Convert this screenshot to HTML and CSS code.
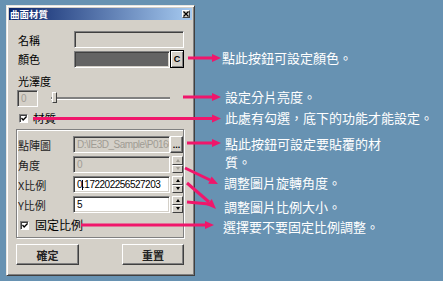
FILE: index.html
```html
<!DOCTYPE html>
<html lang="zh-Hant">
<head>
    <meta charset="UTF-8">
    <meta name="viewport" content="width=device-width, initial-scale=1.0">
    <title>曲面材質</title>
    <link rel="stylesheet" href="styles.css">
</head>
<body>

    <div class="dialog">
        <div class="titlebar">
            <span class="title">曲面材質</span>
            <span class="close">
                <svg width="6" height="6" viewBox="0 0 6 6"><path d="M0.5 0.5 L5.5 5.5 M5.5 0.5 L0.5 5.5" stroke="#000" stroke-width="1.2"/></svg>
            </span>
        </div>

        <div class="dialog-body">
            <div class="row top-row">
                <span class="label">名稱</span>
                <span class="field field-disabled field-wide"></span>
            </div>
            <div class="row top-row row-color">
                <span class="label">顏色</span>
                <span class="field field-color"></span>
                <span class="btn btn-default">C</span>
            </div>
            <div class="row top-row row-label">
                <span class="label">光澤度</span>
            </div>
            <div class="row top-row">
                <span class="field field-disabled field-small"><span class="value muted">0</span></span>
                <div class="slider">
                    <span class="track"></span>
                    <span class="thumb"></span>
                </div>
            </div>
            <div class="row check-row">
                <span class="checkbox">
                    <svg width="7" height="7" viewBox="0 0 7 7"><path d="M0.5 3 L2.5 5.2 L6.5 1" fill="none" stroke="#000" stroke-width="1.6"/></svg>
                </span>
                <span class="check-text">材質</span>
            </div>

            <div class="group">
                <div class="row">
                    <span class="label label-group">點陣圖</span>
                    <span class="field field-disabled field-mid"><span class="value muted">D:\IE3D_Sample\P0160</span></span>
                    <span class="btn btn-dots">...</span>
                </div>
                <div class="row">
                    <span class="label label-group">角度</span>
                    <span class="field field-disabled field-mid"><span class="value muted">0</span></span>
                    <span class="spinner spinner-off">
                        <span class="spin-btn"><span class="up"></span></span>
                        <span class="spin-btn"><span class="down"></span></span>
                    </span>
                </div>
                <div class="row">
                    <span class="label label-group">X比例</span>
                    <span class="field field-mid"><span class="value">0.172202256527203</span><span class="caret"></span></span>
                    <span class="spinner">
                        <span class="spin-btn"><span class="up"></span></span>
                        <span class="spin-btn"><span class="down"></span></span>
                    </span>
                </div>
                <div class="row">
                    <span class="label label-group">Y比例</span>
                    <span class="field field-mid"><span class="value">5</span></span>
                    <span class="spinner">
                        <span class="spin-btn"><span class="up"></span></span>
                        <span class="spin-btn"><span class="down"></span></span>
                    </span>
                </div>
                <div class="row check-row group-check">
                    <span class="checkbox">
                        <svg width="7" height="7" viewBox="0 0 7 7"><path d="M0.5 3 L2.5 5.2 L6.5 1" fill="none" stroke="#000" stroke-width="1.6"/></svg>
                    </span>
                    <span class="check-text">固定比例</span>
                </div>
            </div>

            <div class="actions">
                <span class="btn btn-ok">確定</span>
                <span class="btn btn-reset">重置</span>
            </div>
        </div>
    </div>

    <div class="notes">
        <div class="note note-1">點此按鈕可設定顏色。</div>
        <div class="note note-2">設定分片亮度。</div>
        <div class="note note-3">此處有勾選，底下的功能才能設定。</div>
        <div class="note note-4">點此按鈕可設定要貼覆的材<br>質。</div>
        <div class="note note-5">調整圖片旋轉角度。</div>
        <div class="note note-6">調整圖片比例大小。</div>
        <div class="note note-7">選擇要不要固定比例調整。</div>
    </div>

    <!-- callout arrows -->
    <svg class="arrows" width="443" height="281" viewBox="0 0 443 281">
        <g stroke="#f0166b" stroke-width="3" fill="none">
            <path d="M188 58 H213"/>
            <path d="M183 97 H213"/>
            <path d="M33 118.5 H213"/>
            <path d="M187 143 H213"/>
            <path d="M185 168 L210 180"/>
            <path d="M187 183 L209 202"/>
            <path d="M187 202 L209 204"/>
            <path d="M81 225 H206"/>
        </g>
        <g fill="#f0166b">
            <polygon points="212,54 221,58 212,62"/>
            <polygon points="212,93 221,97 212,101"/>
            <polygon points="212,114.5 221,118.5 212,122.5"/>
            <polygon points="212,139 221,143 212,147"/>
            <polygon points="211.6,176.5 218,184 208.2,183.7"/>
            <polygon points="211.8,199.1 216,209 206.6,205.1"/>
            <polygon points="205,221 214,225 205,229"/>
        </g>
    </svg>

</body>
</html>
```

FILE: styles.css
```css
body {
    margin: 0;
    width: 443px;
    height: 281px;
    position: relative;
    overflow: hidden;
    background-color: #6792b2;
    display: flex;
    align-items: flex-start;
    font-family: "Noto Sans CJK TC", "Liberation Sans", sans-serif;
}

.dialog {
    box-sizing: border-box;
    width: 189px;
    height: 271px;
    margin: 5px 0 0 6px;
    padding: 2px;
    background: #d4d0c8;
    border: 1px solid;
    border-color: #e8e6e0 #404040 #404040 #e8e6e0;
    box-shadow: inset 1px 1px #fff, inset -1px -1px #808080;
    display: flex;
    flex-direction: column;
    flex-shrink: 0;
}

.titlebar {
    height: 12px;
    display: flex;
    align-items: center;
    justify-content: space-between;
    padding: 0 2px 0 1px;
    background: linear-gradient(to right, #0a246a, #a6caf0);
}

.title {
    color: #fff;
    font-size: 9.5px;
    font-weight: bold;
    line-height: 12px;
}

.close {
    box-sizing: border-box;
    width: 8px;
    height: 8px;
    display: flex;
    align-items: center;
    justify-content: center;
    background: #d4d0c8;
    border: 1px solid;
    border-color: #fff #404040 #404040 #fff;
}

.close svg {
    display: block;
}

.dialog-body {
    padding: 11px 8px 0 7px;
    font-size: 11px;
    color: #000;
}

.row {
    display: flex;
    align-items: center;
    height: 17px;
}

.top-row {
    padding-left: 2px;
}

.row + .row {
    margin-top: 2px;
}

.row-color {
    height: 18px;
}

.row-label {
    height: 20px;
    align-items: flex-end;
    margin-top: 0 !important;
}

.label {
    width: 56px;
    flex-shrink: 0;
    line-height: 14px;
}

.label-group {
    width: 55px;
    color: #222;
}

.field {
    box-sizing: border-box;
    height: 17px;
    background: #fff;
    border: 1px solid;
    border-color: #808080 #fff #fff #808080;
    box-shadow: inset 1px 1px #404040, inset -1px -1px #d4d0c8;
    display: flex;
    align-items: center;
    overflow: hidden;
    white-space: nowrap;
    position: relative;
    flex-shrink: 0;
}

.field-disabled {
    background: #d4d0c8;
}

.field-wide {
    width: 110px;
}

.field-color {
    width: 96px;
    background: #646464;
}

.field-small {
    width: 21px;
    margin-left: -1px;
}

.field-mid {
    width: 97px;
}

.value {
    padding-left: 3px;
    font-family: "Liberation Sans", sans-serif;
    font-size: 10px;
    letter-spacing: -0.5px;
    color: #000;
}

.value.muted {
    color: #a09c94;
}

.caret {
    position: absolute;
    left: 8px;
    top: 3px;
    width: 1px;
    height: 10px;
    background: #000;
}

.btn {
    box-sizing: border-box;
    display: flex;
    align-items: center;
    justify-content: center;
    background: #d4d0c8;
    border: 1px solid;
    border-color: #fff #404040 #404040 #fff;
    box-shadow: inset -1px -1px #808080;
    flex-shrink: 0;
}

.btn-default {
    width: 14px;
    height: 18px;
    border: 1px solid #000;
    box-shadow: inset 1px 1px #fff, inset -1px -1px #808080;
    font-family: "Liberation Sans", sans-serif;
    font-size: 9px;
    font-weight: bold;
}

.btn-dots {
    width: 13px;
    height: 17px;
    font-family: "Liberation Sans", sans-serif;
    font-size: 9px;
    font-weight: bold;
    line-height: 8px;
}

.slider {
    position: relative;
    width: 119px;
    height: 17px;
    margin-left: 13px;
}

.track {
    position: absolute;
    left: 0;
    right: 0;
    top: 7px;
    height: 2px;
    background: #808080;
    border-bottom: 1px solid #fff;
}

.thumb {
    position: absolute;
    left: 1px;
    top: 2px;
    box-sizing: border-box;
    width: 5px;
    height: 11px;
    background: #d4d0c8;
    border: 1px solid;
    border-color: #fff #404040 #404040 #fff;
}

.check-row {
    height: 18px;
    padding-left: 3px;
}

.checkbox {
    box-sizing: border-box;
    width: 9px;
    height: 9px;
    background: #fff;
    border: 1px solid;
    border-color: #808080 #fff #fff #808080;
    box-shadow: inset 1px 1px #404040;
    display: flex;
    align-items: center;
    justify-content: center;
}

.checkbox svg {
    display: block;
    margin: 1px 0 0 1px;
}

.check-text {
    margin-left: 5px;
    line-height: 14px;
    font-size: 11.5px;
}

.group {
    box-sizing: border-box;
    width: 168px;
    height: 109px;
    margin-top: 2px;
    padding: 6px 0 3px 1px;
    border: 1px solid #808080;
    box-shadow: inset 1px 1px #fff, 1px 1px #fff;
}

.group .row + .row {
    margin-top: 3px;
}

.group-check {
    padding-left: 2px;
    height: 18px;
}

.group-check .check-text {
    margin-left: 6px;
    font-size: 12px;
}

.spinner {
    width: 11px;
    height: 17px;
    margin-left: 2px;
    display: flex;
    flex-direction: column;
    flex-shrink: 0;
}

.spin-btn {
    box-sizing: border-box;
    height: 8.5px;
    display: flex;
    align-items: center;
    justify-content: center;
    background: #d4d0c8;
    border: 1px solid;
    border-color: #fff #404040 #404040 #fff;
}

.up {
    width: 0;
    height: 0;
    border-left: 2.5px solid transparent;
    border-right: 2.5px solid transparent;
    border-bottom: 3px solid #000;
}

.down {
    width: 0;
    height: 0;
    border-left: 2.5px solid transparent;
    border-right: 2.5px solid transparent;
    border-top: 3px solid #000;
}

.spinner-off .up {
    border-bottom-color: #a09c94;
}

.spinner-off .down {
    border-top-color: #a09c94;
}

.actions {
    display: flex;
    justify-content: space-between;
    width: 168px;
    margin-top: 6px;
}

.btn-ok,
.btn-reset {
    height: 21px;
    font-size: 11px;
    font-weight: bold;
    color: #222;
}

.btn-ok {
    width: 63px;
}

.btn-reset {
    width: 62px;
}

.notes {
    margin-left: 27px;
    display: flex;
    flex-direction: column;
    color: #fff;
    font-size: 13px;
    line-height: 18px;
    white-space: nowrap;
}

.note-1 { margin-top: 49px; }
.note-2 { margin-top: 21px; padding-left: 3px; }
.note-3 { margin-top: 3px; padding-left: 3px; }
.note-4 { margin-top: 8px; padding-left: 3px; }
.note-5 { margin-top: 3px; padding-left: 2px; }
.note-6 { margin-top: 6px; padding-left: 2px; }
.note-7 { margin-top: 2px; padding-left: 1px; }

.arrows {
    position: absolute;
    left: 0;
    top: 0;
    pointer-events: none;
}
```
